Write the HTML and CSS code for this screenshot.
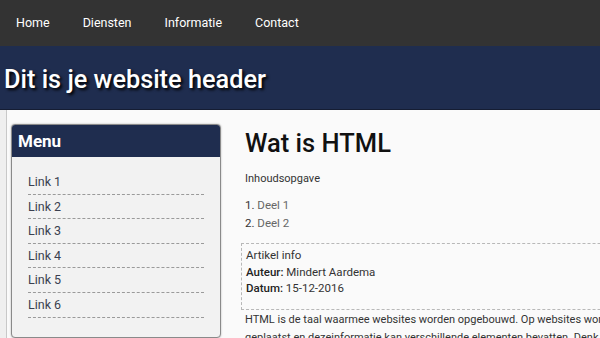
FILE: index.html
```html
<!DOCTYPE html>
<html lang="nl">
<head>
	<meta charset="UTF-8">
	<title>Wat is HTML</title>
	<link rel="stylesheet" href="styles.css">
</head>
<body>

	<nav class="topnav">
		<a href="#">Home</a>
		<a href="#">Diensten</a>
		<a href="#">Informatie</a>
		<a href="#">Contact</a>
	</nav>

	<header class="site-header">
		<h1>Dit is je website header</h1>
	</header>

	<div class="page">
		<aside class="sidebar">
			<h2>Menu</h2>
			<ul>
				<li><a href="#">Link 1</a></li>
				<li><a href="#">Link 2</a></li>
				<li><a href="#">Link 3</a></li>
				<li><a href="#">Link 4</a></li>
				<li><a href="#">Link 5</a></li>
				<li><a href="#">Link 6</a></li>
			</ul>
		</aside>

		<main class="content">
			<h1>Wat is HTML</h1>
			<p class="toc-title">Inhoudsopgave</p>
			<ol class="toc">
				<li><a href="#deel1">Deel 1</a></li>
				<li><a href="#deel2">Deel 2</a></li>
			</ol>

			<div class="info">
				<div>Artikel info</div>
				<div><b>Auteur:</b> Mindert Aardema</div>
				<div><b>Datum:</b> 15-12-2016</div>
			</div>

			<p class="text">HTML is de taal waarmee websites worden opgebouwd. Op websites wordt informatie geplaatst en dezeinformatie kan verschillende elementen bevatten. Denk hierbij aan tekst, afbeeldingen, video en links naar andere pagina's.</p>
		</main>
	</div>

</body>
</html>
```

FILE: styles.css
```css
:root{
	font-family: Roboto, "Liberation Sans", Arial, sans-serif;
}

body{
	margin: 0;
	background-color: #efefef;
	overflow: hidden;
}

a{
	text-decoration: none;
}

.topnav{
	display: flex;
	height: 46px;
	align-items: center;
	background-color: #333;
}

.topnav a{
	padding: 0 17px 2px 16px;
	color: #fff;
	font-size: 12.5px;
}

.site-header{
	display: flex;
	align-items: center;
	height: 63px;
	padding: 0 4px;
	background-color: #1f2d4f;
	border-bottom: 1px solid #151d33;
}

.site-header h1{
	margin: 3px 0 0;
	color: #fff;
	font-size: 25.3px;
	font-weight: 500;
	text-shadow: 2px 2px 3px #000;
}

.page{
	display: flex;
	align-items: flex-start;
	margin-left: 6px;
	padding: 14px 0 0 4px;
	border-left: 1px solid #c8c8c8;
	background-color: #fafafa;
	min-height: 240px;
}

.sidebar{
	flex: none;
	width: 208px;
	height: 212px;
	background-color: #f2f2f2;
	border: 1px solid #8a8a8a;
	border-radius: 4px;
	box-shadow: 0 0 2px rgba(0, 0, 0, 0.3);
	overflow: hidden;
}

.sidebar h2{
	margin: 0;
	height: 32px;
	line-height: 32px;
	padding-left: 6px;
	background-color: #1f2d4f;
	color: #fff;
	font-size: 17px;
	font-weight: bold;
}

.sidebar ul{
	list-style: none;
	margin: 13px 16px 0;
	padding: 0;
}

.sidebar li{
	padding: 3px 0 2px;
	font-size: 12.5px;
	line-height: 18.6px;
	border-bottom: 1px dashed #9a9a9a;
}

.sidebar a{
	color: #3a3f50;
}

.content{
	flex: none;
	width: 460px;
	margin-left: 20px;
	color: #333;
	font-size: 11.5px;
}

.content h1{
	margin: 4px 0 0 4px;
	color: #111;
	font-size: 25.5px;
	font-weight: 500;
	line-height: 30px;
}

.toc-title{
	margin: 14px 0 0 4px;
	font-size: 11px;
}

.toc{
	margin: 11px 0 0 4px;
	padding: 0;
	list-style-position: inside;
	line-height: 18px;
}

.toc a{
	color: #666;
}

.info{
	margin-top: 11px;
	padding: 3px 4px 12px;
	border: 1px dashed #b8b8b8;
	line-height: 16.5px;
}

.info b{
	font-weight: 500;
	color: #222;
}

.text{
	margin: 1px 0 0 4px;
	line-height: 18px;
	font-size: 11px;
}
```
